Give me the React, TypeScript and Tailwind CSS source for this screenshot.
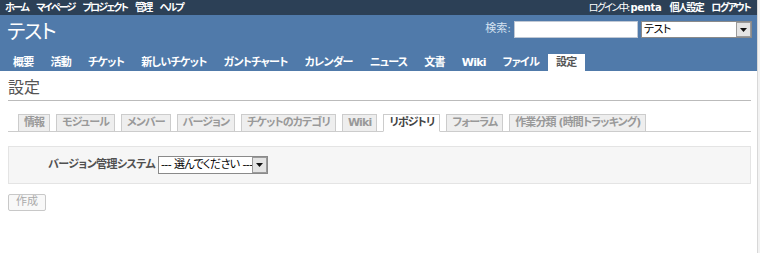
import React from "react";

const F = "font-['DejaVu_Sans','Noto_Sans_CJK_JP',sans-serif] [font-feature-settings:'palt']";

function Arrow() {
  return (
    <div className="w-[15px] h-full bg-[#e4e4e4] border border-[#9a9a9a] flex items-center justify-center">
      <svg width="7" height="4" viewBox="0 0 7 4">
        <polygon points="0,0 7,0 3.5,4" fill="#111" />
      </svg>
    </div>
  );
}

const menu = ["概要", "活動", "チケット", "新しいチケット", "ガントチャート", "カレンダー", "ニュース", "文書", "Wiki", "ファイル", "設定"];
const tabs = ["情報", "モジュール", "メンバー", "バージョン", "チケットのカテゴリ", "Wiki", "リポジトリ", "フォーラム", "作業分類 (時間トラッキング)"];

export default function App() {
  return (
    <div className={`flex w-[760px] h-[253px] bg-white ${F}`}>
      <div className="w-[757px] flex flex-col">
        {/* top menu */}
        <div className="h-[15px] bg-[#2c4056] flex items-center justify-between pl-[5px] pr-[7px] text-[10px] leading-[15px] text-white">
          <div className="flex gap-[8px] font-bold tracking-[-1.8px]">
            <span>ホーム</span>
            <span>マイページ</span>
            <span>プロジェクト</span>
            <span>管理</span>
            <span>ヘルプ</span>
          </div>
          <div className="flex gap-[8px] tracking-[-1.6px]">
            <span>
              ログイン中: <span className="font-bold tracking-[-0.3px]">penta</span>
            </span>
            <span className="font-bold">個人設定</span>
            <span className="font-bold">ログアウト</span>
          </div>
        </div>
        {/* header */}
        <div className="h-[56px] bg-[#507aaa] flex flex-col">
          <div className="flex justify-between items-start">
            <div className="pl-[7px] pt-[4px] text-[20px] leading-[26px] text-white tracking-[-1px]">テスト</div>
            <div className="flex items-center pt-[6px] pr-[5px]">
              <span className="text-[11px] text-[#d5e2f1] mr-[3px]">検索:</span>
              <div className="w-[124px] h-[17px] bg-white border border-[#c0c8d4]" />
              <div className="ml-[3px] w-[111px] h-[17px] bg-white border border-[#8a8a8a] flex">
                <span className="flex-1 text-[11px] leading-[15px] pl-[2px] text-black tracking-[-0.5px]">テスト</span>
                <Arrow />
              </div>
            </div>
          </div>
          <div className="mt-auto h-[17px] flex items-end pl-[5px] gap-[1px]">
            {menu.map((m) => (
              <div
                key={m}
                className={`h-[17px] px-[8px] text-[11px] leading-[17px] font-bold tracking-[-0.75px] ${
                  m === "設定" ? "bg-white text-[#555]" : "text-white"
                }`}
              >
                {m}
              </div>
            ))}
          </div>
        </div>
        {/* content */}
        <div className="px-[8px] pr-[6px]">
          <h2 className="mt-[7px] text-[16px] leading-[20px] text-[#555] pb-[2px] border-b border-[#bbb]">設定</h2>
          <div className="mt-[13px] flex items-end gap-[6px] pl-[10px] border-b border-[#ccc]">
            {tabs.map((t) => (
              <div
                key={t}
                className={`-mb-px h-[18px] px-[5px] border border-[#ccc] text-[11px] leading-[16px] font-bold tracking-[-0.9px] ${
                  t === "リポジトリ" ? "bg-white text-[#444] border-b-white" : "bg-[#eee] text-[#999]"
                }`}
              >
                {t}
              </div>
            ))}
          </div>
          <div className="mt-[14px] h-[38px] bg-[#f6f6f6] border border-[#e4e4e4] flex items-center">
            <span className="w-[146px] text-right text-[11px] font-bold text-[#505050] tracking-[-0.6px]">バージョン管理システム</span>
            <div className="ml-[3px] w-[110px] h-[18px] bg-white border border-[#8a8a8a] flex">
              <span className="flex-1 text-[11px] leading-[16px] pl-[2px] text-black whitespace-nowrap overflow-hidden tracking-[-0.6px]">--- 選んでください ---</span>
              <Arrow />
            </div>
          </div>
          <div className="mt-[10px] w-[38px] h-[17px] border border-[#c8c8c8] rounded-[2px] bg-[#f8f8f8] flex items-center justify-center text-[11px] text-[#aaa]">
            作成
          </div>
        </div>
      </div>
      <div className="w-[3px] border-l border-[#d8d8d8] bg-[#f2f2f2]" />
    </div>
  );
}
